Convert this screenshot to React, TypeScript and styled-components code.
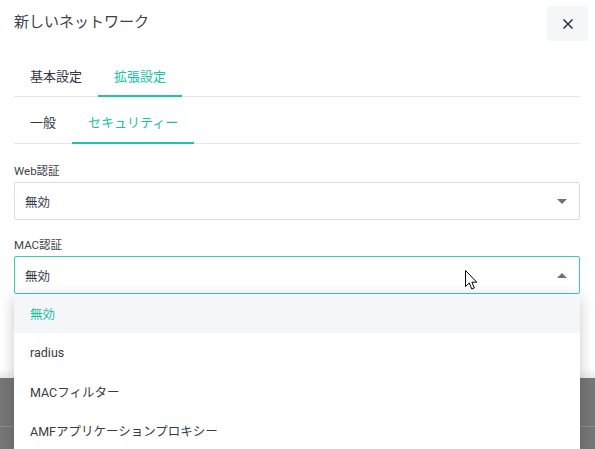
import React from "react";
import styled, { createGlobalStyle } from "styled-components";

const Global = createGlobalStyle`
  html, body { margin: 0; padding: 0; background: #ffffff; }
  body {
    font-family: Roboto, "Noto Sans CJK JP", "Noto Sans", sans-serif;
    color: #343a46;
    width: 595px;
    height: 449px;
    overflow: hidden;
  }
  * { box-sizing: border-box; }
`;

const TEAL = "#1dbfa5";

const Page = styled.div`
  position: relative;
  width: 595px;
  height: 449px;
  display: flex;
  flex-direction: column;
  overflow: hidden;
`;

const Modal = styled.div`
  height: 378px;
  background: linear-gradient(to bottom, #ffffff 0, #ffffff 368px, #ececec 378px);
  padding: 0 15px 0 14px;
  display: flex;
  flex-direction: column;
`;

const Header = styled.div`
  height: 51px;
  display: flex;
  align-items: flex-start;
  justify-content: space-between;
`;

const Title = styled.h1`
  margin: 13px 0 0 0;
  font-size: 15px;
  font-weight: 400;
  line-height: 18px;
  color: #3b404b;
`;

const CloseButton = styled.button`
  margin-top: 6px;
  margin-right: -8px;
  width: 41px;
  height: 35px;
  border: none;
  border-radius: 4px;
  background: #f5f6f7;
  display: flex;
  align-items: center;
  justify-content: center;
  padding: 0;
`;

const TabBar = styled.div<{ $h: number }>`
  display: flex;
  height: ${(p) => p.$h}px;
  border-bottom: 1px solid #e3e6eb;
`;

const Tab = styled.div<{ $active?: boolean; $pt: number }>`
  padding: ${(p) => p.$pt}px 16px 0 16px;
  font-size: 13px;
  line-height: 16px;
  color: ${(p) => (p.$active ? TEAL : "#30353f")};
  border-bottom: 2px solid ${(p) => (p.$active ? "#1fc3a6" : "transparent")};
  margin-bottom: -1px;
`;

const Field = styled.div<{ $mt: number }>`
  margin-top: ${(p) => p.$mt}px;
  display: flex;
  flex-direction: column;
  position: relative;
`;

const Label = styled.label`
  font-size: 11.5px;
  line-height: 16px;
  color: #3d424c;
  margin-bottom: 3px;
`;

const SelectBox = styled.div<{ $open?: boolean }>`
  height: 38px;
  border: 1px solid ${(p) => (p.$open ? "#3fcab6" : "#d9dde3")};
  border-radius: 2px;
  display: flex;
  align-items: center;
  justify-content: space-between;
  padding: 0 12px 0 10px;
  font-size: 12.5px;
  color: #343a46;
  background: #fff;
`;

const Caret = styled.span<{ $up?: boolean }>`
  width: 0;
  height: 0;
  border-left: 5px solid transparent;
  border-right: 5px solid transparent;
  ${(p) =>
    p.$up
      ? "border-bottom: 5px solid #6a7385;"
      : "border-top: 5px solid #6a7385;"}
`;

const Menu = styled.ul`
  position: absolute;
  top: 57px;
  left: 0;
  right: 0;
  margin: 0;
  padding: 0;
  list-style: none;
  background: #fff;
  box-shadow: 0 4px 14px rgba(0, 0, 0, 0.22);
  z-index: 5;
`;

const MenuItem = styled.li<{ $selected?: boolean }>`
  height: 39px;
  display: flex;
  align-items: center;
  padding-left: 16px;
  font-size: 12.5px;
  color: ${(p) => (p.$selected ? TEAL : "#363b45")};
  background: ${(p) => (p.$selected ? "#f5f6fa" : "#fff")};
`;

const Backdrop = styled.div`
  flex: 1;
  background: #777777;
  display: flex;
  flex-direction: column;
`;

const BackdropLine = styled.div`
  margin-top: 48px;
  height: 1px;
  background: #8d8d8d;
`;

const Cursor = styled.svg`
  position: absolute;
  left: 465px;
  top: 270px;
  z-index: 10;
`;

export default function App() {
  return (
    <>
      <Global />
      <Page>
        <Modal>
          <Header>
            <Title>新しいネットワーク</Title>
            <CloseButton aria-label="閉じる">
              <svg width="10" height="10" viewBox="0 0 10 10">
                <path d="M1 1 L9 9 M9 1 L1 9" stroke="#1b2942" strokeWidth="1.4" strokeLinecap="square" />
              </svg>
            </CloseButton>
          </Header>
          <TabBar $h={46}>
            <Tab $pt={18}>基本設定</Tab>
            <Tab $pt={18} $active>拡張設定</Tab>
          </TabBar>
          <TabBar $h={47}>
            <Tab $pt={18}>一般</Tab>
            <Tab $pt={18} $active>セキュリティー</Tab>
          </TabBar>
          <Field $mt={19}>
            <Label>Web認証</Label>
            <SelectBox>
              <span>無効</span>
              <Caret />
            </SelectBox>
          </Field>
          <Field $mt={17}>
            <Label>MAC認証</Label>
            <SelectBox $open>
              <span>無効</span>
              <Caret $up />
            </SelectBox>
            <Menu>
              <MenuItem $selected>無効</MenuItem>
              <MenuItem>radius</MenuItem>
              <MenuItem>MACフィルター</MenuItem>
              <MenuItem>AMFアプリケーションプロキシー</MenuItem>
            </Menu>
          </Field>
        </Modal>
        <Backdrop>
          <BackdropLine />
        </Backdrop>
        <Cursor width="14" height="21" viewBox="0 0 14 21">
          <path
            d="M0.5 0.5 L0.5 16.5 L4.3 13 L6.8 19 L9.3 18 L6.9 12.2 L11.8 12.2 Z"
            fill="#ffffff"
            stroke="#000000"
            strokeWidth="1"
            strokeLinejoin="miter"
          />
        </Cursor>
      </Page>
    </>
  );
}
